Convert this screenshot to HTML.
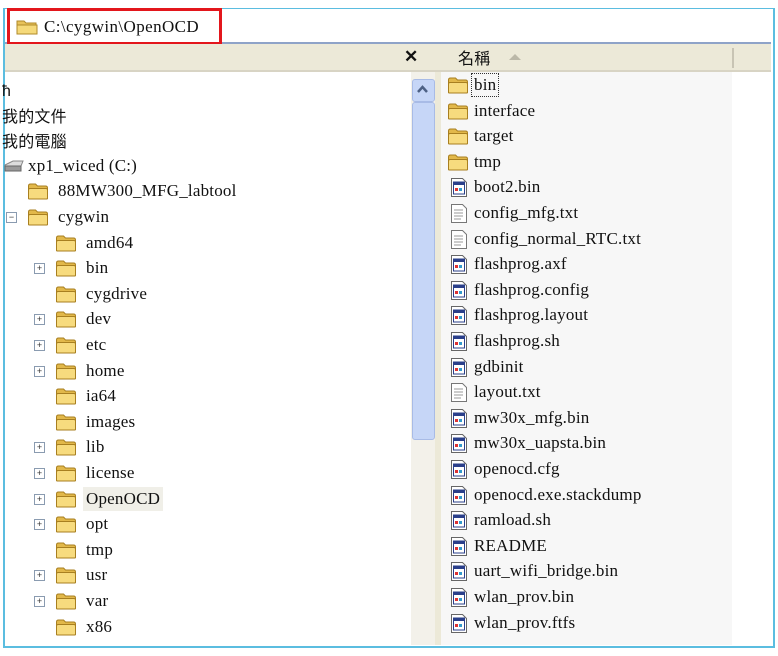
<!DOCTYPE html>
<html><head><meta charset="utf-8"><style>
body{margin:0;width:778px;height:656px;background:#fff;position:relative;overflow:hidden;font-family:"Liberation Serif","Noto Serif CJK SC",serif;font-size:17px;color:#111}
.a{position:absolute}
.r{position:absolute;height:24px;line-height:24px;white-space:nowrap;letter-spacing:0.2px}
.ex{position:absolute;width:9px;height:9px;border:1px solid #8a9bb0;background:#fff;font:9px/9px "Liberation Sans",sans-serif;text-align:center;color:#333}
</style></head><body>
<div class="a" style="left:3px;top:8px;width:768px;height:637px;border:2px solid #5bbde0;border-top-width:1px;"></div>
<div class="a" style="left:5px;top:9px;width:766px;height:33px;background:#fff;border-bottom:2px solid #8fa3c8"></div>
<div class="a" style="left:7px;top:8px;width:209px;height:31px;border:3px solid #e3161c"></div>
<svg class="a" style="left:16px;top:18px" width="22" height="17" viewBox="0 0 22 17"><path d="M1 3h7l2 2h10v11H1z" fill="#e8c25a" stroke="#b08a2a"/><path d="M1 7h20v9H1z" fill="#f5d97a" stroke="#b08a2a"/></svg>
<div class="r" style="left:44px;top:15px;font-size:17px;letter-spacing:0.4px">C:\cygwin\OpenOCD</div>
<div class="a" style="left:5px;top:44px;width:766px;height:26px;background:#ece9d8;border-bottom:2px solid #d8d4c4"></div>
<div class="a" style="left:404px;top:44px;font:bold 17px/26px 'Liberation Sans',sans-serif">✕</div>
<div class="r" style="left:458px;top:45px;font-family:'Noto Sans CJK TC',sans-serif;font-size:16px">名稱</div>
<svg class="a" style="left:508px;top:53px" width="14" height="8"><path d="M1 7L7 1L13 7z" fill="#bbb8a8"/></svg>
<div class="a" style="left:732px;top:48px;width:2px;height:20px;background:#c8c4b4"></div>
<div class="a" style="left:5px;top:72px;width:406px;height:573px;background:#fff"></div>
<div class="a" style="left:411px;top:72px;width:24px;height:573px;background:#f3f1ea"></div>
<div class="a" style="left:412px;top:79px;width:21px;height:21px;background:#c6d6f7;border:1px solid #a8bbe6;border-radius:3px"></div>
<svg class="a" style="left:416px;top:85px" width="13" height="9"><path d="M2 7L6.5 2L11 7" stroke="#4d6185" stroke-width="2.5" fill="none"/></svg>
<div class="a" style="left:412px;top:102px;width:21px;height:336px;background:#c6d6f7;border:1px solid #a8bbe6;border-radius:3px"></div>
<div class="a" style="left:435px;top:72px;width:6px;height:573px;background:#ece9d8"></div>
<div class="a" style="left:441px;top:72px;width:291px;height:573px;background:#f7f7f7"></div>
<div id="t"></div>
<script>
var F='<svg width="22" height="18" viewBox="0 0 22 18"><path d="M1.5 4q0-2 2-2h5l2 2h8q2 0 2 2v10q0 1-1 1H2.5q-1 0-1-1z" fill="#e2b84a" stroke="#a87f20"/><path d="M1.5 8q0-1.5 1.5-1.5h16q1.5 0 1.5 1.5v8q0 1-1 1H2.5q-1 0-1-1z" fill="#f7db7e" stroke="#a87f20"/></svg>';
var B='<svg width="16" height="19" viewBox="0 0 16 19"><path d="M.5 .5h11l4 4v14H.5z" fill="#fff" stroke="#666"/><rect x="2.5" y="4" width="11" height="12" fill="#fff" stroke="#2a3f8a"/><rect x="2.5" y="4" width="11" height="3" fill="#2a3f8a"/><rect x="4" y="10" width="3" height="3" fill="#d33"/><rect x="8" y="10" width="3" height="3" fill="#39c"/></svg>';
var T='<svg width="16" height="19" viewBox="0 0 16 19"><path d="M.5 .5h11l4 4v14H.5z" fill="#fff" stroke="#777"/><path d="M3 6h9M3 9h9M3 12h9M3 15h7" stroke="#999"/></svg>';
var h='';
var tree=[[0,'',0,'ћ'],[0,'',0,'我的文件'],[0,'',0,'我的電腦'],[1,'d',0,'xp1_wiced (C:)'],[1,'f',0,'88MW300_MFG_labtool'],[1,'f','-','cygwin'],[2,'f',0,'amd64'],[2,'f','+','bin'],[2,'f',0,'cygdrive'],[2,'f','+','dev'],[2,'f','+','etc'],[2,'f','+','home'],[2,'f',0,'ia64'],[2,'f',0,'images'],[2,'f','+','lib'],[2,'f','+','license'],[2,'f','+','OpenOCD'],[2,'f','+','opt'],[2,'f',0,'tmp'],[2,'f','+','usr'],[2,'f','+','var'],[2,'f',0,'x86']];
tree.forEach(function(e,i){var y=77+i*25.6;
 if(e[0]==0){h+='<div class="r" style="left:2px;top:'+y+'px;font-family:\'Noto Sans CJK TC\',sans-serif;font-size:16px">'+e[3]+'</div>';return;}
 var ix=e[0]==1?27:55, tx=e[0]==1?58:86;
 if(e[2])h+='<div class="ex" style="left:'+(ix-21)+'px;top:'+(y+7)+'px">'+(e[2]=='-'?'−':'+')+'</div>';
 if(e[1]=='d'){h+='<svg class="a" style="left:3px;top:'+(y+5)+'px" width="22" height="14"><path d="M2 6l8-4h10l-2 5H2z" fill="#ddd" stroke="#888"/><path d="M2 7h16v5H2z" fill="#999" stroke="#666"/></svg>';tx=28;}
 else h+='<div class="a" style="left:'+ix+'px;top:'+(y+3)+'px">'+F+'</div>';
 h+='<div class="r" style="left:'+tx+'px;top:'+y+'px;'+(e[3]=='OpenOCD'?'background:#f0efe8;padding:0 3px;margin-left:-3px':'')+'">'+e[3]+'</div>';
});
var files=[['f','bin'],['f','interface'],['f','target'],['f','tmp'],['b','boot2.bin'],['t','config_mfg.txt'],['t','config_normal_RTC.txt'],['b','flashprog.axf'],['b','flashprog.config'],['b','flashprog.layout'],['b','flashprog.sh'],['b','gdbinit'],['t','layout.txt'],['b','mw30x_mfg.bin'],['b','mw30x_uapsta.bin'],['b','openocd.cfg'],['b','openocd.exe.stackdump'],['b','ramload.sh'],['b','README'],['b','uart_wifi_bridge.bin'],['b','wlan_prov.bin'],['b','wlan_prov.ftfs']];
files.forEach(function(e,i){var y=73+i*25.6;
 if(e[0]=='f')h+='<div class="a" style="left:447px;top:'+(y+3)+'px">'+F+'</div>';
 else h+='<div class="a" style="left:451px;top:'+(y+3)+'px">'+(e[0]=='b'?B:T)+'</div>';
 h+='<div class="r" style="left:474px;top:'+y+'px;'+(i==0?'outline:1px dotted #333;padding:0 2px;margin-left:-2px;height:22px;top:'+(y+1)+'px;line-height:22px':'')+'">'+e[1]+'</div>';
});
document.getElementById('t').innerHTML=h;
</script>
</body></html>
